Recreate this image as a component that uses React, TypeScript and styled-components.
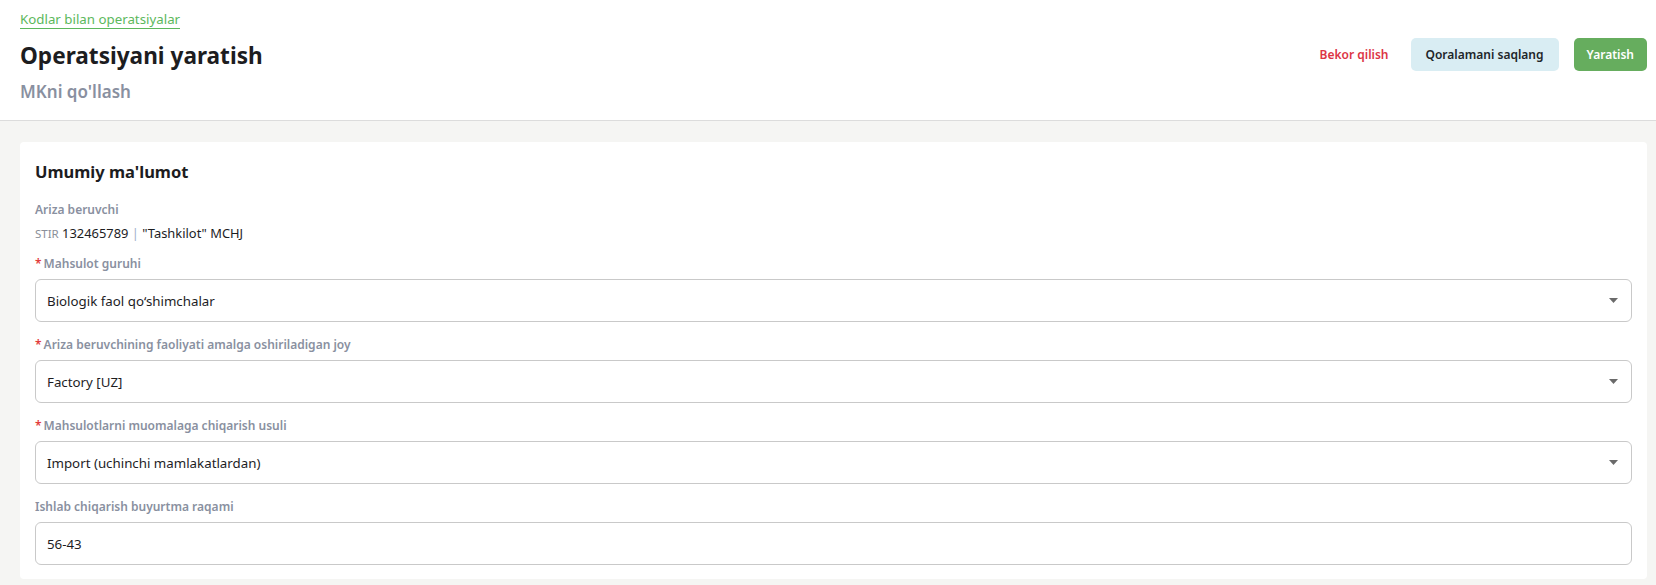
import React from "react";
import styled, { createGlobalStyle } from "styled-components";

const GlobalStyle = createGlobalStyle`
    html, body {
        margin: 0;
        padding: 0;
        background: #f5f5f3;
        font-family: "Noto Sans", "Open Sans", Arial, sans-serif;
        color: #212529;
    }
    * {
        box-sizing: border-box;
    }
`

const Header = styled.header`
    display: flex;
    justify-content: space-between;
    align-items: flex-start;
    height: 121px;
    padding: 10px 9px 0 20px;
    background: #ffffff;
    border-bottom: 1px solid #dcdcdc;
`

const TitleBlock = styled.div`
    display: flex;
    flex-direction: column;
    align-items: flex-start;
`

const Breadcrumb = styled.a`
    display: inline-block;
    font-size: 13.3px;
    line-height: 18px;
    color: #5cb85c;
    text-decoration: none;
    border-bottom: 1px solid #5cb85c;
`

const Title = styled.h1`
    margin: 11px 0 0;
    font-size: 22.6px;
    line-height: 32px;
    font-weight: 700;
    color: #1d1d1f;
`

const Subtitle = styled.h2`
    margin: 8px 0 0;
    font-size: 17px;
    line-height: 24px;
    font-weight: 600;
    color: #8990a0;
`

const Actions = styled.div`
    display: flex;
    align-items: center;
    gap: 15px;
    margin-top: 28px;
`

const Button = styled.button<{ $variant: "link" | "light" | "primary" }>`
    height: 33px;
    border: none;
    border-radius: 5px;
    font-family: inherit;
    font-size: 12px;
    font-weight: 600;
    cursor: pointer;
    background: ${p => p.$variant === "light" ? "#d9edf3" : p.$variant === "primary" ? "#66ad5e" : "transparent"};
    color: ${p => p.$variant === "light" ? "#212529" : p.$variant === "primary" ? "#ffffff" : "#dc3545"};
    padding: ${p => p.$variant === "link" ? "0 7px 0 0" : p.$variant === "light" ? "0 15px" : "0 13px"};
`

const Main = styled.main`
    padding: 21px 9px 7px 20px;
`

const Card = styled.section`
    background: #ffffff;
    border-radius: 4px;
    padding: 18px 15px 14px;
`

const CardTitle = styled.h3`
    margin: 0;
    font-size: 16.5px;
    line-height: 24px;
    font-weight: 700;
    color: #1d1d1f;
`

const ApplicantLabel = styled.div`
    margin-top: 18px;
    font-size: 12px;
    line-height: 16px;
    font-weight: 600;
    color: #8990a0;
`

const ApplicantValue = styled.div`
    margin-top: 6px;
    font-size: 12.9px;
    line-height: 18px;
    color: #1d1d1f;
`

const Muted = styled.span`
    font-size: 11.5px;
    color: #8a8f99;
`

const Separator = styled.span`
    color: #9fb0c8;
`

const Fields = styled.div`
    display: flex;
    flex-direction: column;
    gap: 15px;
    margin-top: 13px;
`

const Field = styled.div`
    display: flex;
    flex-direction: column;
    gap: 7px;
`

const Label = styled.label`
    font-size: 12px;
    line-height: 16px;
    font-weight: 600;
    color: #8990a0;
`

const Required = styled.span`
    color: #e23b3b;
    margin-right: 2px;
`

const Control = styled.div`
    display: flex;
    align-items: center;
    justify-content: space-between;
    height: 43px;
    padding: 0 13px 0 11px;
    border: 1px solid #c9c9c9;
    border-radius: 6px;
    font-size: 13.3px;
    color: #1d1d1f;
    background: #ffffff;
`

function Caret() {
    return <svg width="9" height="5" viewBox="0 0 9 5">
        <path d="M0 0 H9 L4.5 5 Z" fill="#6a6a6a" />
    </svg>
}

const fields = [
    { label: "Mahsulot guruhi", value: "Biologik faol qo‘shimchalar", required: true, select: true },
    { label: "Ariza beruvchining faoliyati amalga oshiriladigan joy", value: "Factory [UZ]", required: true, select: true },
    { label: "Mahsulotlarni muomalaga chiqarish usuli", value: "Import (uchinchi mamlakatlardan)", required: true, select: true },
    { label: "Ishlab chiqarish buyurtma raqami", value: "56-43", required: false, select: false },
]

export default function App() {
    return <>
        <GlobalStyle />
        <Header>
            <TitleBlock>
                <Breadcrumb href="#">Kodlar bilan operatsiyalar</Breadcrumb>
                <Title>Operatsiyani yaratish</Title>
                <Subtitle>MKni qo'llash</Subtitle>
            </TitleBlock>
            <Actions>
                <Button $variant="link">Bekor qilish</Button>
                <Button $variant="light">Qoralamani saqlang</Button>
                <Button $variant="primary">Yaratish</Button>
            </Actions>
        </Header>
        <Main>
            <Card>
                <CardTitle>Umumiy ma'lumot</CardTitle>
                <ApplicantLabel>Ariza beruvchi</ApplicantLabel>
                <ApplicantValue>
                    <Muted>STIR</Muted> 132465789 <Separator>|</Separator> "Tashkilot" MCHJ
                </ApplicantValue>
                <Fields>
                    {fields.map(f => <Field key={f.label}>
                        <Label>{f.required && <Required>*</Required>}{f.label}</Label>
                        <Control>
                            <span>{f.value}</span>
                            {f.select && <Caret />}
                        </Control>
                    </Field>)}
                </Fields>
            </Card>
        </Main>
    </>
}
